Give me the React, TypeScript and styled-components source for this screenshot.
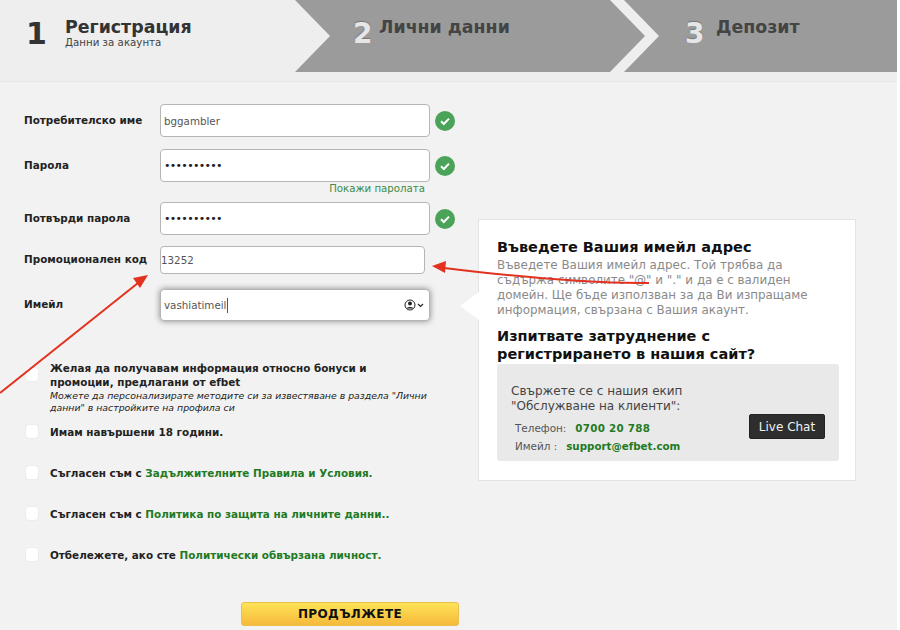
import styled, { createGlobalStyle } from "styled-components";

const Global = createGlobalStyle`
  * {
    box-sizing: border-box;
  }
  html,
  body {
    margin: 0;
    background: #ffffff;
  }
  body {
    width: 900px;
    height: 630px;
    overflow: hidden;
    font-family: "DejaVu Sans", Verdana, sans-serif;
  }
`;
const Page = styled.div`
  position: relative;
  width: 897px;
  height: 630px;
  overflow: hidden;
  background: #f2f2f2;
`;
const Steps = styled.div`
  display: flex;
  height: 82px;
  padding-bottom: 10px;
  background: #eeeeee;
  border-bottom: 1px solid #e8e8e8;
`;
const StepBase = styled.div`
  display: flex;
  height: 72px;
  flex-shrink: 0;
`;
const FirstStep = styled(StepBase)`
  width: 330px;
  padding-left: 26px;
  clip-path: polygon(0 0, 295px 0, 330px 36px, 295px 72px, 0 72px);
`;
const MiddleStep = styled(StepBase)`
  width: 350px;
  margin-left: -35px;
  padding-left: 58px;
  background: #9b9b9b;
  clip-path: polygon(0 0, 315px 0, 350px 36px, 315px 72px, 0 72px, 35px 36px);
`;
const LastStep = styled(StepBase)`
  flex: 1;
  margin-left: -21px;
  padding-left: 61px;
  background: #9b9b9b;
  clip-path: polygon(0 0, 100% 0, 100% 100%, 0 100%, 35px 36px);
`;
const StepNumber = styled.div<{ $active?: boolean; $width: number }>`
  width: ${(p) => p.$width}px;
  padding-top: 16px;
  font-size: ${(p) => (p.$active ? "30px" : "28px")};
  line-height: 36px;
  font-weight: 700;
  color: ${(p) => (p.$active ? "#333333" : "#e6e6e6")};
  text-shadow: ${(p) => (p.$active ? "none" : "0 -1px 1px #777777")};
`;
const StepText = styled.div`
  padding-top: 16px;
`;
const StepTitle = styled.div<{ $active?: boolean }>`
  font-size: 17.4px;
  line-height: 22px;
  font-weight: 700;
  color: ${(p) => (p.$active ? "#333333" : "#444444")};
`;
const StepSub = styled.div`
  margin-top: -1px;
  font-size: 10.25px;
  line-height: 10px;
  color: #444444;
`;
const Main = styled.div`
  display: flex;
  align-items: flex-start;
`;
const FormCol = styled.div`
  width: 478px;
  flex-shrink: 0;
  padding: 22px 0 0 24px;
`;
const Row = styled.div<{ $gap: number }>`
  display: flex;
  align-items: center;
  margin-bottom: ${(p) => p.$gap}px;
`;
const Label = styled.label`
  width: 136px;
  flex-shrink: 0;
  padding-bottom: 2px;
  font-size: 10.4px;
  font-weight: 700;
  color: #222222;
`;
const Input = styled.input<{ $short?: boolean }>`
  width: ${(p) => (p.$short ? "265px" : "270px")};
  height: ${(p) => (p.$short ? "28px" : "33px")};
  padding: 0 ${(p) => (p.$short ? "0" : "3px")};
  border: 1px solid #b5b5b5;
  border-radius: 4px;
  background: #ffffff;
  outline: none;
  font-family: inherit;
  font-size: 10.3px;
  color: #555555;
  &[type="password"] {
    color: #222222;
    letter-spacing: -0.7px;
    font-size: 11px;
  }
`;
const EmailField = styled.div`
  display: flex;
  align-items: center;
  width: 270px;
  height: 32px;
  padding: 0 5px 0 3px;
  border: 1px solid #b5b5b5;
  border-radius: 4px;
  background: #ffffff;
  box-shadow: 0 0 6px rgba(0, 0, 0, 0.45);
  font-size: 10.3px;
  color: #555555;
`;
const Caret = styled.span`
  width: 1px;
  height: 15px;
  margin-left: 1px;
  background: #555555;
`;
const ContactIcon = styled.svg`
  margin-left: auto;
`;
const CheckMark = styled.svg`
  margin-left: 5px;
  flex-shrink: 0;
`;
const ShowPassword = styled.div`
  width: 401px;
  margin: -7px 0 7px;
  text-align: right;
  font-size: 10.2px;
  line-height: 13px;
  color: #3f8a45;
`;
const Options = styled.div`
  margin-top: 40px;
  padding-left: 1px;
`;
const Option = styled.div<{ $gap: number; $top?: boolean }>`
  display: flex;
  align-items: ${(p) => (p.$top ? "flex-start" : "center")};
  gap: 11px;
  width: 425px;
  margin-bottom: ${(p) => p.$gap}px;
`;
const Tick = styled.input<{ $offset?: number }>`
  appearance: none;
  width: 14px;
  height: 15px;
  margin: ${(p) => p.$offset ?? 0}px 0 0;
  flex-shrink: 0;
  border: 1px solid #ececec;
  border-radius: 4px;
  background: #ffffff;
`;
const OptionBody = styled.div`
  font-size: 10.4px;
  line-height: 14px;
  font-weight: 700;
  color: #222222;
`;
const OptionNote = styled.div`
  margin-top: 1px;
  font-size: 9.35px;
  line-height: 12px;
  font-weight: 400;
  font-style: italic;
`;
const Green = styled.span`
  color: #1f7a24;
`;
const Submit = styled.button`
  display: block;
  width: 218px;
  height: 24px;
  margin: 40px 0 0 217px;
  border: 1px solid #e8c04a;
  border-radius: 3px;
  background: linear-gradient(#ffe357, #f5b93b);
  font-family: inherit;
  font-size: 12px;
  font-weight: 700;
  letter-spacing: 0.4px;
  color: #111111;
`;
const Panel = styled.aside`
  position: relative;
  width: 378px;
  height: 262px;
  margin-top: 137px;
  padding: 18px 16px 0 18px;
  border: 1px solid #e3e3e3;
  background: #ffffff;
  &::before {
    content: "";
    position: absolute;
    left: -19px;
    top: 72px;
    border-style: solid;
    border-width: 14px 19px 14px 0;
    border-color: transparent #ffffff transparent transparent;
  }
`;
const PanelTitle = styled.h3`
  margin: 0;
  font-size: 14.5px;
  line-height: 18px;
  font-weight: 700;
  color: #111111;
`;
const PanelText = styled.p`
  margin: 2px 0 9px;
  font-size: 11.9px;
  line-height: 15px;
  color: #8a8a8a;
`;
const HelpBox = styled.div`
  display: flex;
  justify-content: space-between;
  align-items: flex-end;
  height: 97px;
  margin-top: 1px;
  padding: 20px 14px 9px 14px;
  border-radius: 3px;
  background: #e9e9e9;
`;
const HelpLead = styled.div`
  font-size: 12px;
  line-height: 15px;
  color: #444444;
`;
const Contact = styled.div`
  display: flex;
  gap: 9px;
  margin-top: 8px;
  padding-left: 4px;
  font-size: 10.4px;
  line-height: 12px;
  color: #555555;
  & + & {
    margin-top: 6px;
  }
`;
const ContactValue = styled.span<{ $spaced?: boolean }>`
  font-size: 10.3px;
  font-weight: 700;
  letter-spacing: ${(p) => (p.$spaced ? "0.3px" : "0")};
  color: #1f7a24;
`;
const ChatButton = styled.button`
  width: 76px;
  height: 25px;
  margin-bottom: 13px;
  padding: 0;
  border: 1px solid #222222;
  border-radius: 2px;
  background: #2e2e2e;
  font-family: inherit;
  font-size: 12px;
  color: #f2f2f2;
`;
const Arrows = styled.svg`
  position: absolute;
  left: 0;
  top: 0;
  pointer-events: none;
`;

const Check = () => (
  <CheckMark width="20" height="20" viewBox="0 0 20 20">
    <circle cx="10" cy="10" r="10" fill="#4ba35a" />
    <path d="M6 10.3l2.8 2.7L14 7.6" fill="none" stroke="#fff" strokeWidth="2" />
  </CheckMark>
);

export default function App() {
  return (
    <Page>
      <Global />
      <Steps>
        <FirstStep>
          <StepNumber $active $width={39}>1</StepNumber>
          <StepText>
            <StepTitle $active>Регистрация</StepTitle>
            <StepSub>Данни за акаунта</StepSub>
          </StepText>
        </FirstStep>
        <MiddleStep>
          <StepNumber $width={26}>2</StepNumber>
          <StepText>
            <StepTitle>Лични данни</StepTitle>
          </StepText>
        </MiddleStep>
        <LastStep>
          <StepNumber $width={31}>3</StepNumber>
          <StepText>
            <StepTitle>Депозит</StepTitle>
          </StepText>
        </LastStep>
      </Steps>
      <Main>
        <FormCol>
          <Row $gap={12}>
            <Label>Потребителско име</Label>
            <Input readOnly value="bggambler" />
            <Check />
          </Row>
          <Row $gap={7}>
            <Label>Парола</Label>
            <Input readOnly type="password" value="1234567890" />
            <Check />
          </Row>
          <ShowPassword>Покажи паролата</ShowPassword>
          <Row $gap={11}>
            <Label>Потвърди парола</Label>
            <Input readOnly type="password" value="1234567890" />
            <Check />
          </Row>
          <Row $gap={15}>
            <Label>Промоционален код</Label>
            <Input readOnly $short value="13252" />
          </Row>
          <Row $gap={0}>
            <Label>Имейл</Label>
            <EmailField>
              vashiatimeil
              <Caret />
              <ContactIcon width="20" height="12" viewBox="0 0 20 12">
                <circle cx="6" cy="6" r="5" fill="none" stroke="#222" strokeWidth="1" />
                <circle cx="6" cy="4.5" r="2" fill="#222" />
                <path d="M2.5 9.5c.8-2 6.2-2 7 0z" fill="#222" />
                <path d="M14 5l2.5 2.5L19 5" fill="none" stroke="#222" strokeWidth="1.1" />
              </ContactIcon>
            </EmailField>
          </Row>
          <Options>
            <Option $gap={10} $top>
              <Tick type="checkbox" $offset={6} />
              <OptionBody>
                Желая да получавам информация относно бонуси и
                <br />
                промоции, предлагани от efbet
                <OptionNote>
                  Можете да персонализирате методите си за известяване в раздела "Лични данни" в
                  настройките на профила си
                </OptionNote>
              </OptionBody>
            </Option>
            <Option $gap={26}>
              <Tick type="checkbox" />
              <OptionBody>Имам навършени 18 години.</OptionBody>
            </Option>
            <Option $gap={26}>
              <Tick type="checkbox" />
              <OptionBody>
                Съгласен съм с <Green>Задължителните Правила и Условия.</Green>
              </OptionBody>
            </Option>
            <Option $gap={26}>
              <Tick type="checkbox" />
              <OptionBody>
                Съгласен съм с <Green>Политика по защита на личните данни..</Green>
              </OptionBody>
            </Option>
            <Option $gap={0}>
              <Tick type="checkbox" />
              <OptionBody>
                Отбележете, ако сте <Green>Политически обвързана личност.</Green>
              </OptionBody>
            </Option>
          </Options>
          <Submit>ПРОДЪЛЖЕТЕ</Submit>
        </FormCol>
        <Panel>
          <PanelTitle>Въведете Вашия имейл адрес</PanelTitle>
          <PanelText>
            Въведете Вашия имейл адрес. Той трябва да съдържа символите "@" и "." и да е с валиден
            домейн. Ще бъде използван за да Ви изпращаме информация, свързана с Вашия акаунт.
          </PanelText>
          <PanelTitle>Изпитвате затруднение с регистрирането в нашия сайт?</PanelTitle>
          <HelpBox>
            <div>
              <HelpLead>
                Свържете се с нашия екип
                <br />
                "Обслужване на клиенти":
              </HelpLead>
              <Contact>
                Телефон: <ContactValue $spaced>0700 20 788</ContactValue>
              </Contact>
              <Contact>
                Имейл : <ContactValue>support@efbet.com</ContactValue>
              </Contact>
            </div>
            <ChatButton>Live Chat</ChatButton>
          </HelpBox>
        </Panel>
      </Main>
      <Arrows width="897" height="630" viewBox="0 0 897 630">
        <path d="M0 393L138 283" fill="none" stroke="#e2311f" strokeWidth="2" />
        <path d="M148 275l-15 3 7 10z" fill="#e2311f" />
        <path d="M649 283C590 284 510 276 444 268" fill="none" stroke="#e2311f" strokeWidth="2" />
        <path d="M432 266l14-5-1 12z" fill="#e2311f" />
      </Arrows>
    </Page>
  );
}
